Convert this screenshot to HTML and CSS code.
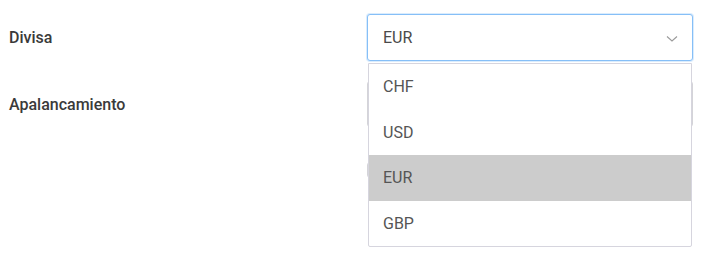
FILE: index.html
```html
<!DOCTYPE html>
<html lang="es">
<head>
<meta charset="utf-8">
<title>Formulario</title>
<link rel="stylesheet" href="styles.css">
</head>
<body>
<form class="form">
  <div class="row row-1">
    <label class="label">Divisa</label>
    <div class="field">
      <div class="select is-open">
        <span class="select-value">EUR</span>
        <svg class="chevron" width="12" height="8" viewBox="0 0 12 8"><path d="M1 1.5 L6 6 L11 1.5" fill="none" stroke="#9a9a9a" stroke-width="1.1"/></svg>
      </div>
      <ul class="menu">
        <li class="option">CHF</li>
        <li class="option">USD</li>
        <li class="option is-active">EUR</li>
        <li class="option">GBP</li>
      </ul>
    </div>
  </div>
  <div class="row row-2">
    <label class="label">Apalancamiento</label>
    <div class="field">
      <div class="input"></div>
    </div>
  </div>
  <div class="row row-3">
    <span class="label"></span>
    <div class="field">
      <div class="toggle"></div>
    </div>
  </div>
</form>
</body>
</html>
```
FILE: styles.css
```css
html, body {
  margin: 0;
  padding: 0;
  background: #ffffff;
}
body {
  font-family: Roboto, "Liberation Sans", Arial, sans-serif;
  width: 720px;
  height: 260px;
  overflow: hidden;
}
.form {
  display: flex;
  flex-direction: column;
  padding: 14px 0 0 9px;
}
.row {
  display: grid;
  grid-template-columns: 358px 326px;
  align-items: center;
}
.row-2 {
  margin-top: 20px;
}
.row-3 {
  margin-top: 35px;
}
.label {
  font-size: 16px;
  font-weight: 500;
  color: #3a3a3a;
}
.field {
  position: relative;
}
.select {
  box-sizing: border-box;
  height: 47px;
  border: 1px solid #86bff7;
  border-radius: 3px;
  box-shadow: 0 0 0 1px rgba(150, 200, 250, 0.35);
  display: flex;
  align-items: center;
  justify-content: space-between;
  padding: 0 14px 0 15px;
  background: #fff;
}
.select-value {
  font-size: 16px;
  color: #4a4a4a;
}
.chevron {
  margin-top: 2px;
}
.menu {
  position: absolute;
  z-index: 2;
  top: 49px;
  left: 1px;
  width: 324px;
  box-sizing: border-box;
  margin: 0;
  padding: 0;
  list-style: none;
  border: 1px solid #d6d5de;
  border-radius: 0 0 2px 2px;
  background: #fff;
}
.option {
  height: 45.5px;
  display: flex;
  align-items: center;
  padding-left: 14px;
  font-size: 16px;
  color: #555555;
}
.option.is-active {
  background: #cccccc;
}
.input {
  box-sizing: border-box;
  height: 46px;
  border: 1px solid #d4d4d8;
  border-radius: 3px;
  background: #fff;
}
.toggle {
  box-sizing: border-box;
  height: 16px;
  width: 40px;
  border: 1px solid #d4d4d8;
  border-radius: 3px;
  background: #fff;
}
```
